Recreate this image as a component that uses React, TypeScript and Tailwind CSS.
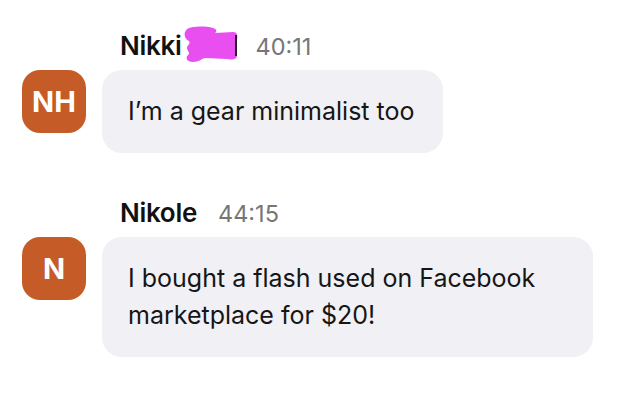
import React from "react";

function Blob() {
  return (
    <svg width="56" height="37" viewBox="0 0 56 37" className="absolute left-[-3px] top-[-4px]">
      <path
        d="M4 3 C10 0, 22 0, 30 2 C34 3, 34 6, 32 7 L50 6 C54 6, 55 9, 54 14 L54 30 C54 33, 50 34, 44 33 L22 32 C18 33, 16 36, 10 36 C4 36, 2 32, 5 29 C8 27, 4 25, 4 22 C4 19, 8 18, 6 15 C2 13, 1 9, 2 6 Z"
        fill="#e94ff0"
      />
      <rect x="52" y="9" width="2" height="21" fill="#2a1a2a" />
    </svg>
  );
}

function Message({
  name,
  initials,
  time,
  text,
  hidden,
}: {
  name: string;
  initials: string;
  time: string;
  text: string;
  hidden?: boolean;
}) {
  return (
    <div className="flex flex-col">
      <div className="flex items-baseline pl-[98px] text-[26px] leading-[32px]">
        <span className="font-semibold text-[#111] tracking-[-0.3px]">{name}</span>
        {hidden && (
          <span className="relative ml-[5px] w-[48px] font-semibold text-transparent">
            H
            <Blob />
          </span>
        )}
        <span className="ml-[21px] text-[23.5px] text-[#767676]">{time}</span>
      </div>
      <div className="mt-[7px] flex items-start gap-[16px]">
        <div className="flex h-[63px] w-[64px] shrink-0 items-center justify-center rounded-[18px] bg-[#c55b26] text-[29px] font-bold text-white">
          {initials}
        </div>
        <div className="max-w-[491px] rounded-[20px] bg-[#f0f0f5] py-[23px] pl-[26px] pr-[28px] text-[25px] leading-[37px] text-[#161616]">
          {text}
        </div>
      </div>
    </div>
  );
}

export default function App() {
  return (
    <div
      className="h-[402px] w-[630px] bg-white pl-[22px] pt-[30px]"
      style={{ fontFamily: "Inter, 'Noto Sans', sans-serif" }}
    >
      <Message
        name="Nikki"
        initials="NH"
        time="40:11"
        text="I’m a gear minimalist too"
        hidden
      />
      <div className="mt-[44px]">
        <Message
          name="Nikole"
          initials="N"
          time="44:15"
          text="I bought a flash used on Facebook marketplace for $20!"
        />
      </div>
    </div>
  );
}
